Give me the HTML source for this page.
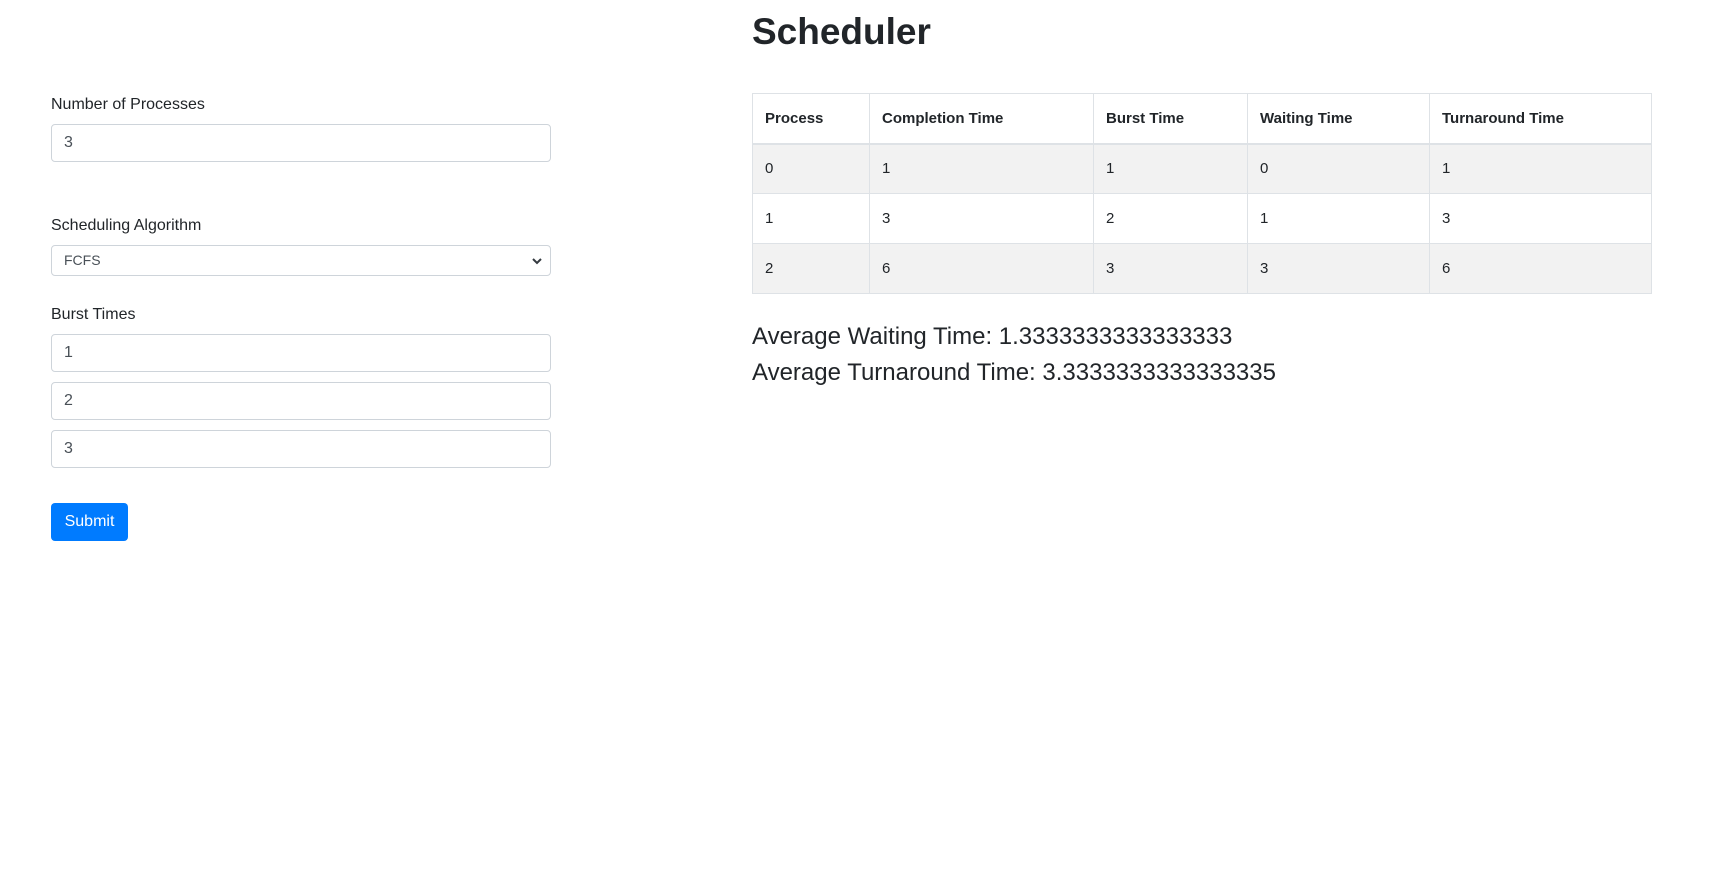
<!DOCTYPE html>
<html><head><meta charset="utf-8"><style>
*{box-sizing:border-box;margin:0;padding:0}
body{width:1726px;height:886px;background:#fff;font-family:"Liberation Sans",sans-serif;color:#212529;position:relative;overflow:hidden}
.a{position:absolute}
label{position:absolute;font-size:16px;left:51px}
.in{position:absolute;left:51px;width:500px;height:38px;border:1px solid #ced4da;border-radius:4px;padding:0 12px;font-size:16px;line-height:36px;color:#495057}
.sel{height:31px;line-height:29px;font-size:14px;padding:0 12px}
.btn{position:absolute;left:51px;top:503px;width:77px;height:38px;background:#007bff;color:#fff;border-radius:4px;font-size:16px;text-align:center;line-height:38px}
h1{position:absolute;left:752px;top:10px;font-size:37px;font-weight:bold;line-height:44px}
table{position:absolute;left:752px;top:93px;width:900px;border-collapse:collapse;font-size:15px}
td,th{border:1px solid #dee2e6;height:50px;padding:0 12px;text-align:left}
thead th{border-bottom:2px solid #dee2e6;font-weight:bold}
tbody tr:nth-child(odd){background:#f2f2f2}
.avg{position:absolute;left:752px;font-size:24px;line-height:36px}
</style></head><body>
<label style="top:96px">Number of Processes</label>
<div class="in" style="top:124px">3</div>
<label style="top:217px">Scheduling Algorithm</label>
<div class="in sel" style="top:245px">FCFS<svg class="a" style="right:8px;top:11px" width="10" height="8" viewBox="0 0 10 8"><path d="M1 2l4 4 4-4" stroke="#343a40" stroke-width="2" fill="none"/></svg></div>
<label style="top:306px">Burst Times</label>
<div class="in" style="top:334px">1</div>
<div class="in" style="top:382px">2</div>
<div class="in" style="top:430px">3</div>
<div class="btn">Submit</div>
<h1>Scheduler</h1>
<table>
<colgroup><col style="width:117px"><col style="width:224px"><col style="width:154px"><col style="width:182px"><col></colgroup>
<thead><tr><th>Process</th><th>Completion Time</th><th>Burst Time</th><th>Waiting Time</th><th>Turnaround Time</th></tr></thead>
<tbody>
<tr><td>0</td><td>1</td><td>1</td><td>0</td><td>1</td></tr>
<tr><td>1</td><td>3</td><td>2</td><td>1</td><td>3</td></tr>
<tr><td>2</td><td>6</td><td>3</td><td>3</td><td>6</td></tr>
</tbody></table>
<div class="avg" style="top:319px">Average Waiting Time: 1.3333333333333333</div>
<div class="avg" style="top:355px">Average Turnaround Time: 3.3333333333333335</div>
</body></html>
